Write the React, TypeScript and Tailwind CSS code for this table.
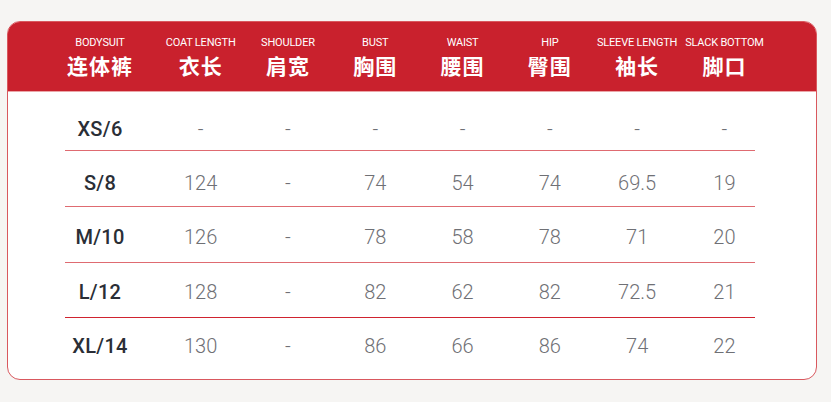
const headers = [
  { en: "BODYSUIT", zh: "连体裤" },
  { en: "COAT LENGTH", zh: "衣长" },
  { en: "SHOULDER", zh: "肩宽" },
  { en: "BUST", zh: "胸围" },
  { en: "WAIST", zh: "腰围" },
  { en: "HIP", zh: "臀围" },
  { en: "SLEEVE LENGTH", zh: "袖长" },
  { en: "SLACK BOTTOM", zh: "脚口" },
];

const rows = [
  { size: "XS/6", values: ["-", "-", "-", "-", "-", "-", "-"], cls: "h-[58px] pt-[15px]" },
  { size: "S/8", values: ["124", "-", "74", "54", "74", "69.5", "19"], cls: "h-[55px] pt-[8px]" },
  { size: "M/10", values: ["126", "-", "78", "58", "78", "71", "20"], cls: "h-[55px] pt-[5px]" },
  { size: "L/12", values: ["128", "-", "82", "62", "82", "72.5", "21"], cls: "h-[54px] pt-[3px]" },
  { size: "XL/14", values: ["130", "-", "86", "66", "86", "74", "22"], cls: "h-[53px] pt-[2px]" },
];

const lineColors = ["bg-[#df6b71]", "bg-[#df6b71]", "bg-[#df6b71]", "bg-[#d0232f]"];

export default function App() {
  return (
    <div
      className="w-[831px] h-[402px] bg-[#f6f5f3] pt-[21px] pl-[7px]"
      style={{ fontFamily: "Roboto, 'Noto Sans CJK SC', sans-serif" }}
    >
      <div className="w-[810px] h-[359px] rounded-[13px] overflow-hidden border border-[#d9585e] bg-white">
        {/* header */}
        <div className="h-[70px] bg-[#c9212d] flex pl-[42px] border-b border-[#eba6a8]">
          {headers.map((h, i) => (
            <div
              key={h.en}
              className={`flex flex-col items-center pt-[14px] text-white ${i === 0 ? "w-[107px] pr-[7px]" : "w-[87.3px]"}`}
            >
              <span className="text-[11px] leading-[13px] tracking-[-0.2px] whitespace-nowrap">{h.en}</span>
              <span className="text-[21px] leading-[26px] font-bold mt-[5px] tracking-[1px]">{h.zh}</span>
            </div>
          ))}
        </div>
        {/* body */}
        <div>
          {rows.map((r, ri) => (
            <div key={r.size}>
              <div className={`flex items-center pl-[42px] ${r.cls}`}>
                <div className="w-[107px] pr-[7px] text-center text-[20px] font-medium text-[#2a2e36] tracking-[0.3px]">
                  {r.size}
                </div>
                {r.values.map((v, vi) => (
                  <div key={vi} className="w-[87.3px] text-center text-[20px] font-light text-[#6f7075]">
                    {v}
                  </div>
                ))}
              </div>
              {ri < lineColors.length && <div className={`ml-[57px] w-[690px] h-px ${lineColors[ri]}`} />}
            </div>
          ))}
        </div>
      </div>
    </div>
  );
}
